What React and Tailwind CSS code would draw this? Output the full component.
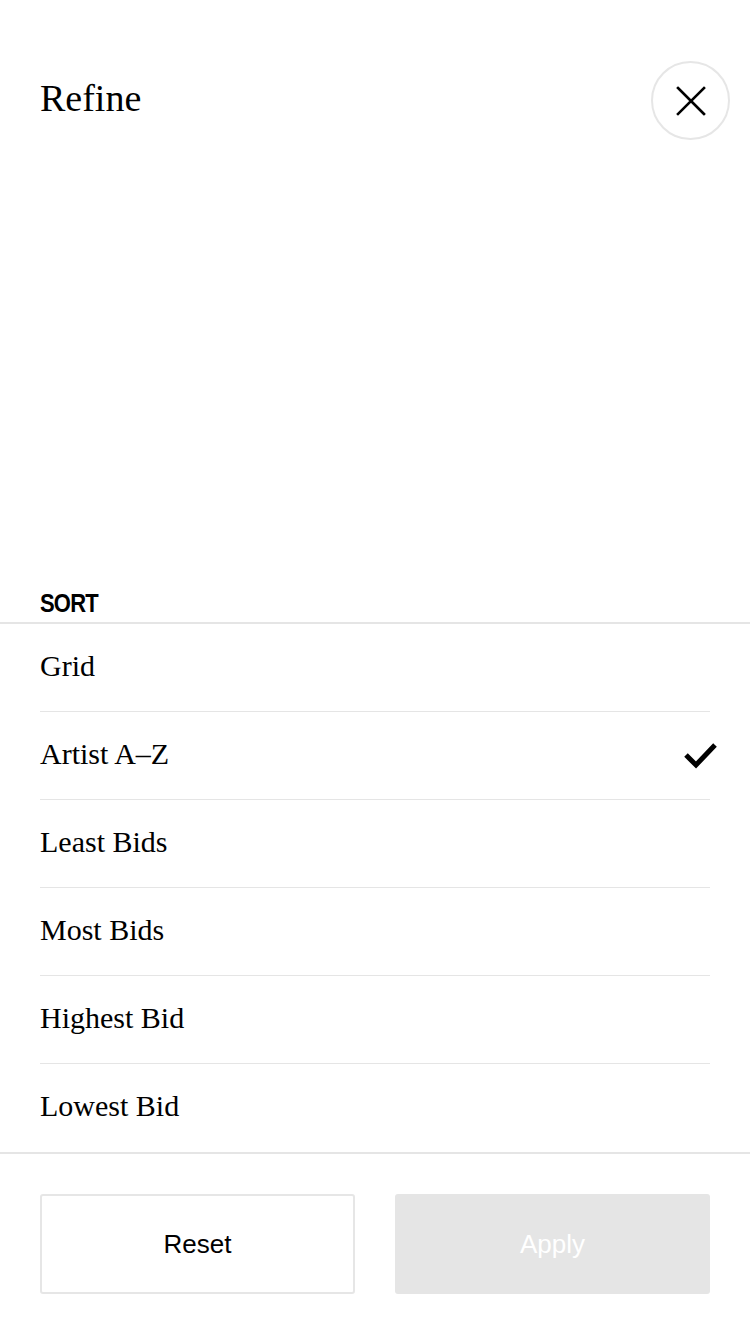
const OPTIONS = ['Grid', 'Artist A–Z', 'Least Bids', 'Most Bids', 'Highest Bid', 'Lowest Bid']

// Refine sheet – sort options with reset/apply actions
export default function App() {
  const selected = 'Artist A–Z'
  const serif = { fontFamily: '"Liberation Serif", "Times New Roman", serif' }

  return (
    <div className="w-[750px] h-[1334px] bg-white flex flex-col" style={{ fontFamily: '"Liberation Sans", Arial, sans-serif' }}>
      {/* Header */}
      <div className="flex items-center justify-between pl-10 pr-5 pt-[61px]">
        <h1 className="text-[38px] leading-none text-black -mt-[6px]" style={serif}>Refine</h1>
        <button className="w-[79px] h-[79px] rounded-full border-2 border-[#e6e6e6] flex items-center justify-center">
          <svg width="30" height="30" viewBox="0 0 30 30" fill="none" stroke="black" strokeWidth="2.6" strokeLinecap="square">
            <path d="M2 2L28 28M28 2L2 28" />
          </svg>
        </button>
      </div>

      <div className="flex-1" />

      {/* Sort */}
      <div className="px-10 pb-[2px]">
        <span className="inline-block origin-bottom scale-y-[1.2] text-[22px] font-bold leading-none tracking-[-0.8px] text-black">SORT</span>
      </div>
      <div className="h-[2px] bg-[#e5e5e5]" />
      <ul className="px-10">
        {OPTIONS.map((opt, i) => (
          <li
            key={opt}
            className={`h-[88px] flex items-center justify-between ${i < OPTIONS.length - 1 ? 'border-b border-[#e5e5e5]' : ''}`}
          >
            <span className="text-[30px] leading-none text-black -mt-1" style={serif}>{opt}</span>
            {opt === selected && (
              <svg width="34" height="28" viewBox="0 0 34 28" className="-mr-2" fill="none" stroke="black" strokeWidth="5" strokeLinejoin="miter">
                <path d="M2 13L12 23L31 3" />
              </svg>
            )}
          </li>
        ))}
      </ul>
      <div className="h-[2px] bg-[#e5e5e5]" />

      {/* Actions */}
      <div className="flex justify-between px-10 pt-10 pb-10">
        <button className="w-[315px] h-[100px] rounded-[3px] border-2 border-[#e6e6e6] text-[26px] text-black">Reset</button>
        <button className="w-[315px] h-[100px] rounded-[3px] bg-[#e5e5e5] text-[26px] text-white">Apply</button>
      </div>
    </div>
  )
}
